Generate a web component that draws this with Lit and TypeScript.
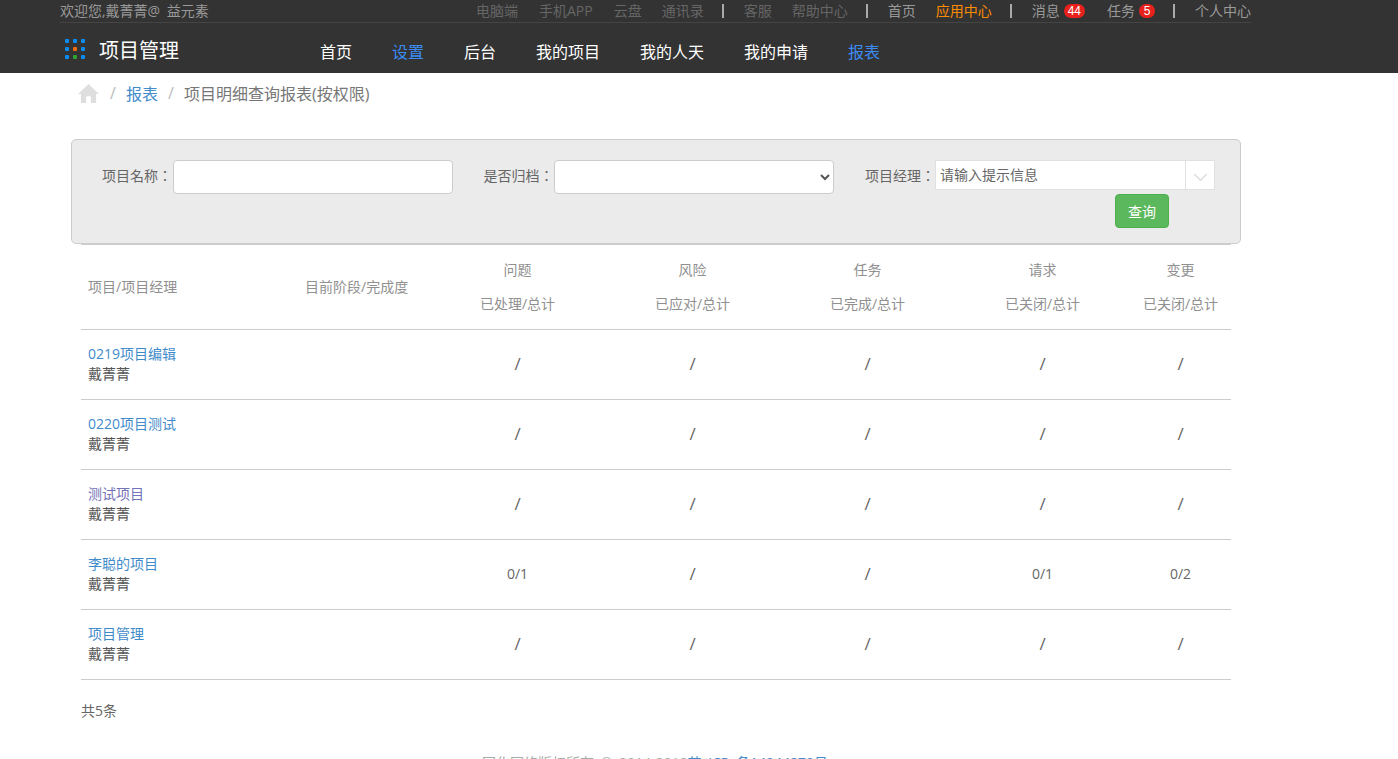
import { css, html, LitElement } from "lit";
import { customElement } from "lit/decorators.js";

const TOP_DIM = ["电脑端", "手机APP", "云盘", "通讯录"];
const NAV = [
  { label: "首页" },
  { label: "设置", active: true },
  { label: "后台" },
  { label: "我的项目" },
  { label: "我的人天" },
  { label: "我的申请" },
  { label: "报表", active: true },
];
const COLS = [
  ["问题", "已处理/总计"],
  ["风险", "已应对/总计"],
  ["任务", "已完成/总计"],
  ["请求", "已关闭/总计"],
  ["变更", "已关闭/总计"],
];
const ROWS = [
  { name: "0219项目编辑", pm: "戴菁菁", cells: ["/", "/", "/", "/", "/"] },
  { name: "0220项目测试", pm: "戴菁菁", cells: ["/", "/", "/", "/", "/"] },
  { name: "测试项目", pm: "戴菁菁", visited: true, cells: ["/", "/", "/", "/", "/"] },
  { name: "李聪的项目", pm: "戴菁菁", cells: ["0/1", "/", "/", "0/1", "0/2"] },
  { name: "项目管理", pm: "戴菁菁", cells: ["/", "/", "/", "/", "/"] },
];
const DOTS = ["#0a8cf5", "#0a8cf5", "#0a8cf5", "#0a8cf5", "#f2680f", "#0a8cf5", "#0a8cf5", "#2ba52e", "#0a8cf5"];

@customElement("app-root")
export class AppRoot extends LitElement {
  render() {
    return html`
      <header class="header">
        <div class="top">
          <span class="welcome">欢迎您,戴菁菁@ 益元素</span>
          <div class="top-links">
            ${TOP_DIM.map((t) => html`<a class="dim">${t}</a>`)}
            <i class="sep"></i>
            <a class="dim">客服</a>
            <a class="dim">帮助中心</a>
            <i class="sep"></i>
            <a>首页</a>
            <a class="orange">应用中心</a>
            <i class="sep"></i>
            <a class="with-badge msg">消息<b class="badge">44</b></a>
            <a class="with-badge">任务<b class="badge">5</b></a>
            <i class="sep"></i>
            <a>个人中心</a>
          </div>
        </div>
        <div class="main-bar">
          <div class="logo">
            <div class="dots">
              ${DOTS.map((c) => html`<span style="background:${c}"></span>`)}
            </div>
            <span class="logo-text">项目管理</span>
          </div>
          <nav class="nav">
            ${NAV.map((n) => html`<a class=${n.active ? "active" : ""}>${n.label}</a>`)}
          </nav>
        </div>
      </header>

      <div class="crumbs">
        <svg class="home" viewBox="0 0 22 20" width="21" height="19">
          <path fill="#dedede" d="M11 0 L22 10.5 L19 10.5 L19 20 L13.5 20 L13.5 13 L8.5 13 L8.5 20 L3 20 L3 10.5 L0 10.5 Z" />
        </svg>
        <span class="slash">/</span>
        <a class="crumb-link">报表</a>
        <span class="slash">/</span>
        <span class="crumb-now">项目明细查询报表(按权限)</span>
      </div>

      <section class="panel">
        <div class="fields">
          <label class="field">
            <span>项目名称：</span>
            <input class="ctl" type="text" />
          </label>
          <label class="field">
            <span>是否归档：</span>
            <select class="ctl"><option></option></select>
          </label>
          <label class="field">
            <span>项目经理：</span>
            <div class="combo">
              <input type="text" placeholder="请输入提示信息" />
              <div class="combo-arrow">
                <svg viewBox="0 0 16 10" width="15" height="9">
                  <path d="M1 1 L8 8 L15 1" fill="none" stroke="#dcdcdc" stroke-width="1.6" />
                </svg>
              </div>
            </div>
          </label>
        </div>
        <div class="actions"><button class="btn">查询</button></div>
      </section>

      <table class="grid">
        <colgroup>
          <col style="width:215px" />
          <col style="width:134px" />
          <col style="width:175px" />
          <col style="width:175px" />
          <col style="width:175px" />
          <col style="width:175px" />
          <col style="width:101px" />
        </colgroup>
        <thead>
          <tr>
            <th class="left">项目/项目经理</th>
            <th class="left stage">目前阶段/完成度</th>
            ${COLS.map(
              (c) => html`<th><div class="th-top">${c[0]}</div><div>${c[1]}</div></th>`
            )}
          </tr>
        </thead>
        <tbody>
          ${ROWS.map(
            (r) => html`<tr>
              <td class="left">
                <a class="pname ${r.visited ? "visited" : ""}">${r.name}</a>
                <div class="pm">${r.pm}</div>
              </td>
              <td></td>
              ${r.cells.map((c) => html`<td class=${c === "/" ? "empty" : ""}>${c}</td>`)}
            </tr>`
          )}
        </tbody>
      </table>

      <div class="total">共5条</div>
      <footer class="footer">园化网络版权所有 © 2014-2018<a>苏 ICP 备14044870号</a></footer>
    `;
  }

  static styles = css`
    :host {
      display: block;
      height: 100vh;
      overflow: hidden;
      background: #fff;
      color: #555;
      font-family: "Open Sans", "Noto Sans CJK SC", sans-serif;
      font-size: 14px;
    }

    /* header */
    .header {
      height: 73px;
      background: #333;
      padding-left: 60px;
      box-sizing: border-box;
    }
    .top {
      width: 1191px;
      height: 23px;
      box-sizing: border-box;
      border-bottom: 1px solid #444;
      display: flex;
      justify-content: space-between;
      align-items: center;
      line-height: 22px;
      color: #999;
    }
    .welcome {
      word-spacing: 3px;
    }
    .top-links {
      display: flex;
      align-items: center;
      gap: 20px;
      color: #999;
    }
    .top-links a:nth-child(1),
    .top-links a:nth-child(2) {
      margin-right: 1px;
    }
    .dim {
      color: #666;
    }
    .orange {
      color: #ff8c00;
    }
    .sep {
      width: 2px;
      height: 14px;
      background: #aaa;
      margin-left: -2px;
    }
    .with-badge {
      display: flex;
      align-items: center;
      gap: 4px;
    }
    .msg {
      margin-right: 2px;
    }
    .badge {
      min-width: 16px;
      height: 14px;
      padding: 0 4px;
      box-sizing: border-box;
      border-radius: 7px;
      background: #e8211d;
      color: #fff;
      font-family: "Liberation Sans", sans-serif;
      font-size: 12px;
      font-weight: 400;
      line-height: 14px;
      text-align: center;
    }
    .main-bar {
      display: flex;
      align-items: center;
      height: 50px;
      padding-top: 6px;
      box-sizing: border-box;
    }
    .logo {
      width: 260px;
      display: flex;
      align-items: center;
      padding-left: 5px;
      box-sizing: border-box;
      gap: 14px;
    }
    .dots {
      display: grid;
      grid-template-columns: repeat(3, 4px);
      grid-auto-rows: 4px;
      gap: 4px;
      margin-bottom: 4px;
    }
    .dots span {
      border-radius: 1px;
    }
    .logo-text {
      color: #fff;
      font-size: 20px;
      line-height: 26px;
    }
    .nav {
      display: flex;
      gap: 40px;
      font-size: 16px;
      color: #fff;
    }
    .nav .active {
      color: #3b8cf5;
    }

    /* breadcrumb */
    .crumbs {
      height: 40px;
      padding-left: 78px;
      display: flex;
      align-items: center;
      font-size: 16px;
      color: #777;
    }
    .home {
      margin-right: 11px;
    }
    .slash {
      color: #bbb;
      width: 5px;
      margin-right: 11px;
    }
    .crumb-link {
      color: #428bca;
      margin-right: 10px;
    }

    /* search panel */
    .panel {
      width: 1170px;
      height: 105px;
      margin: 26px 0 0 71px;
      padding: 20px 0 0 30px;
      box-sizing: border-box;
      background: #ebebeb;
      border: 1px solid #ccc;
      border-radius: 5px;
    }
    .fields {
      display: flex;
    }
    .field {
      flex: none;
      width: 381.5px;
      display: flex;
      align-items: flex-start;
      line-height: 30px;
      color: #666;
    }
    /* TC face: its full-width colon sits centred like the reference */
    .field span {
      width: 70px;
      white-space: nowrap;
      font-family: "Noto Sans CJK TC", sans-serif;
    }
    .field:first-child span {
      width: 71px;
    }
    .ctl {
      width: 280px;
      height: 34px;
      box-sizing: border-box;
      padding: 0 6px;
      border: 1px solid #ccc;
      border-radius: 4px;
      background: #fff;
      font: inherit;
      color: #555;
      outline: none;
    }
    .combo {
      width: 280px;
      height: 30px;
      box-sizing: border-box;
      display: flex;
      border: 1px solid #e0e0e0;
      background: #fff;
    }
    .combo input {
      flex: 1;
      min-width: 0;
      border: 0;
      padding: 0 4px;
      font: inherit;
      outline: none;
    }
    .combo input::placeholder {
      color: #666;
      opacity: 1;
    }
    .combo-arrow {
      width: 29px;
      border-left: 1px solid #e0e0e0;
      display: flex;
      align-items: center;
      justify-content: center;
      padding-top: 5px;
      box-sizing: border-box;
    }
    .actions {
      display: flex;
      justify-content: flex-end;
      padding-right: 71px;
    }
    .btn {
      width: 54px;
      height: 34px;
      padding: 0;
      border: 1px solid #4cae4c;
      border-radius: 4px;
      background: #5cb85c;
      color: #fff;
      font: inherit;
    }

    /* table */
    .grid {
      width: 1150px;
      margin-left: 81px;
      border-collapse: collapse;
      table-layout: fixed;
      border-top: 1px solid #ccc;
      line-height: 20px;
    }
    th {
      height: 84px;
      padding: 0;
      font-weight: 400;
      color: #909090;
      text-align: center;
      border-bottom: 1px solid #ccc;
    }
    .th-top {
      margin-bottom: 14px;
    }
    td {
      height: 70px;
      padding: 0 0 2px;
      box-sizing: border-box;
      text-align: center;
      border-bottom: 1px solid #ccc;
      color: #666;
    }
    td.empty {
      font-size: 17px;
      color: #666;
    }
    .left {
      text-align: left;
      padding-left: 7px;
    }
    th.stage {
      padding-left: 9px;
    }
    .pname {
      display: block;
      color: #428bca;
      line-height: 20px;
    }
    .pname.visited {
      color: #7272b8;
    }
    .pm {
      line-height: 20px;
      color: #555;
    }
    .total {
      margin: 21px 0 0 81px;
      line-height: 20px;
      color: #666;
    }
    .footer {
      width: 1310px;
      margin-top: 32px;
      text-align: center;
      line-height: 20px;
      word-spacing: 3px;
      color: #aaa;
    }
    .footer a {
      color: #428bca;
    }
  `;
}
